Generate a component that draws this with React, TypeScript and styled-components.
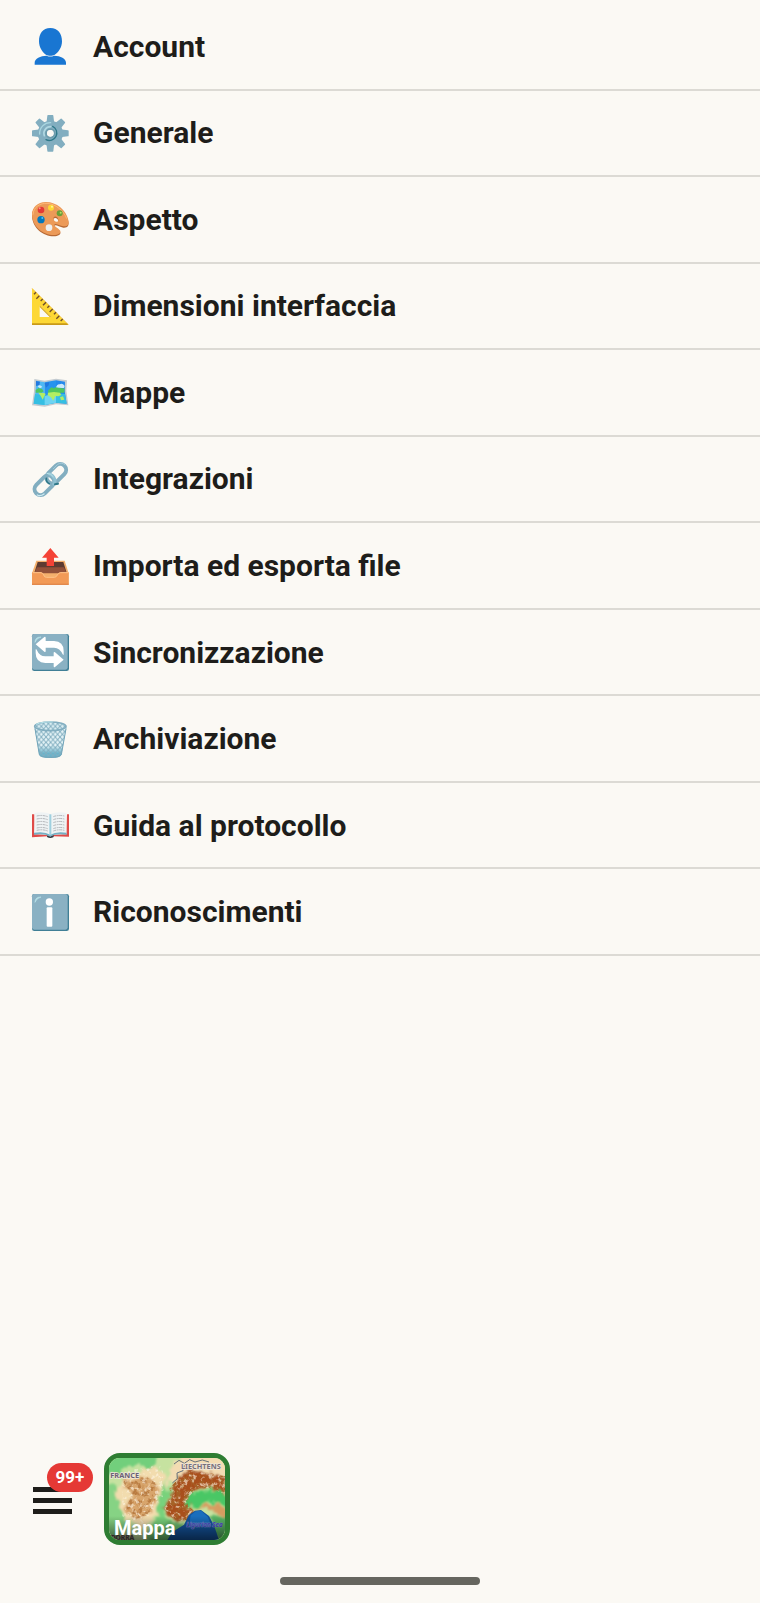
import React from "react";
import styled, { createGlobalStyle } from "styled-components";

const GlobalStyle = createGlobalStyle`
  * { box-sizing: border-box; }
  body { margin: 0; background: #fbf9f4; color: #1e1d1a; font-family: Roboto, "Liberation Sans", sans-serif; text-rendering: geometricPrecision; }
`;

const Menu = styled.ul`
  list-style: none;
  margin: 0;
  padding: 4px 0 0;
  min-height: 956px;
  display: grid;
  grid-template-columns: 1fr;
  grid-auto-rows: 1fr;
`;

const Page = styled.div`
  min-height: 100vh;
  display: flex;
  flex-direction: column;
  background: #fbf9f4;
`;

const MenuItem = styled.li`
  display: flex;
  border-bottom: 2px solid #dcdad4;
`;

const MenuButton = styled.button`
  flex: 1;
  display: flex;
  align-items: center;
  gap: 24px;
  padding: 1px 32px 0;
  border: 0;
  background: none;
  color: inherit;
  font: 700 30px/36px Roboto, "Liberation Sans", sans-serif;
  text-align: left;
  cursor: pointer;
`;

const Icon = styled.svg`
  width: 37px;
  height: 37px;
  flex: none;
  overflow: visible;
`;

const BottomBar = styled.footer`
  margin-top: auto;
  display: flex;
  align-items: center;
  gap: 32px;
  padding: 24px 32px 32px 33px;
`;

const HamburgerButton = styled.button`
  position: relative;
  display: flex;
  flex-direction: column;
  gap: 6px;
  padding: 2px 0 0;
  border: 0;
  background: none;
  cursor: pointer;
`;

const Bar = styled.span`
  width: 39px;
  height: 5px;
  background: #1e1d1a;
`;

const Badge = styled.span`
  position: absolute;
  left: 14px;
  bottom: 22px;
  width: 46px;
  border-radius: 15px;
  background: #e53935;
  color: #fff;
  font: 700 17px/29px Roboto, "Liberation Sans", sans-serif;
  text-align: center;
`;

const MapButton = styled.button`
  position: relative;
  display: flex;
  width: 126px;
  height: 92px;
  padding: 0;
  overflow: hidden;
  border: 5px solid #2e7d32;
  border-radius: 16px;
  background: #b9d99a;
  cursor: pointer;
`;

const MapArt = styled.svg`
  width: 100%;
  height: 100%;
`;

const MapLabel = styled.span`
  position: absolute;
  left: 0;
  right: 0;
  bottom: 0;
  padding: 0 5px;
  background: linear-gradient(transparent, rgba(0, 0, 0, 0.55));
  color: #fff;
  font: 700 20px/24px Roboto, "Liberation Sans", sans-serif;
  text-align: left;
`;

const HomeIndicator = styled.div`
  align-self: center;
  width: 200px;
  height: 8px;
  margin-bottom: 18px;
  border-radius: 4px;
  background: #66665f;
`;

const PersonArt = () => (
  <g fill="#1976d2">
    <path d="M55 0C32 0 21 17 21 40C21 58 32 75 43 81C48 84 62 84 67 81C79 75 90 58 90 40C90 17 78 0 55 0Z" />
    <path d="M8 110V104C8 92 25 83 44 83Q55 88 66 83C86 83 102 92 102 104V110Z" />
  </g>
);

const GearArt = () => (
  <>
    <g fill="#82aec0">
      {[0, 45, 90, 135, 180, 225, 270, 315].map((a) => (
        <path key={a} d="M43 26L46 2Q46 0 48 0H62Q64 0 64 2L67 26Z" transform={`rotate(${a} 55 55)`} />
      ))}
      <path fillRule="evenodd" d="M55 17A38 38 0 1 1 54.9 17ZM55 45A10 10 0 1 0 55.1 45Z" />
    </g>
    <path d="M23 57A32 32 0 0 1 56 23" fill="none" stroke="#a9d6e0" strokeWidth="4" strokeLinecap="round" />
    <path d="M37 62A20 20 0 0 1 56 35" fill="none" stroke="#b0d8e2" strokeWidth="5" strokeLinecap="round" />
    <path d="M62 34A22 22 0 0 1 42 74" fill="none" stroke="#2f7889" strokeWidth="4" strokeLinecap="round" />
    <circle cx="55" cy="55" r="13" fill="none" stroke="#6d9cac" strokeWidth="5" />
    <circle cx="55" cy="55" r="10" fill="#fbf9f4" />
  </>
);

const paletteShape =
  "M41 3C16 4 0 19 0 41C1 77 34 102 65 102C79 102 87 97 85 90C83 83 66 77 67 71C69 65 82 74 94 76C107 77 112 70 109 57C103 27 72 2 41 3ZM65 49C69 44 78 48 79 56C80 63 71 64 67 59C65 56 64 52 65 49Z";
const PaletteArt = () => (
  <>
    <path d={paletteShape} transform="translate(0 4)" fill="#b86a35" fillRule="evenodd" />
    <path d={paletteShape} fill="#ec9a58" fillRule="evenodd" />
    <path d="M3 41C4 17 26 6 45 7C70 8 96 30 104 53" fill="none" stroke="#ffb877" strokeWidth="3" />
    <circle cx="27" cy="27" r="10" fill="#e53935" />
    <circle cx="57" cy="20" r="9" fill="#fdd835" />
    <circle cx="83" cy="37" r="9" fill="#689f38" />
    <circle cx="27" cy="56" r="11" fill="#0277bd" />
    <circle cx="51" cy="80" r="10" fill="#eeeeee" />
    <circle cx="23" cy="22" r="3" fill="#ff9187" />
    <circle cx="60" cy="17" r="3" fill="#fff59d" />
    <circle cx="86" cy="35" r="3" fill="#b6dc68" />
    <circle cx="31" cy="51" r="3" fill="#4fc3f7" />
  </>
);

const RulerArt = () => (
  <>
    <path d="M0 1L109 110H0ZM23 52V87H58Z" fill="#fdd835" fillRule="evenodd" />
    <path d="M0 106H105L109 111H0Z" fill="#c99a18" />
    <path d="M23 52L58 87H53L23 57Z" fill="#d8aa20" />
    <path d="M0 1L109 110" stroke="#f2b82c" strokeWidth="2" />
    {[0, 1, 2, 3, 4, 5, 6, 7, 8].map((i) => (
      <path
        key={i}
        d={i % 2 ? "M12 13L3 22" : "M12 13L6 19"}
        transform={`translate(${i * 10} ${i * 10})`}
        stroke="#6d4c2b"
        strokeWidth="4"
      />
    ))}
  </>
);

const WorldMapArt = () => (
  <>
    <path d="M7 15L38 20L72 14L105 19L103 50L109 94L72 91L38 98L0 94L6 52Z" fill="#c3cbd0" />
    <path d="M12 20L38 25L38 93L5 89L11 52Z" fill="#4db8f5" />
    <path d="M38 25L72 19L72 86L38 93Z" fill="#2793ee" />
    <path d="M72 19L99 23L98 51L104 89L72 86Z" fill="#2389ed" />
    <path d="M9 60L38 66L72 58L99 60L104 89L72 86L38 93L5 89Z" fill="#35bfe2" />
    <path d="M38 66L72 58V86L38 93Z" fill="#6dd4f2" />
    <path d="M12 21L24 23L22 34L12 36ZM38 28L52 24L50 34L42 41Z" fill="#2378df" />
    <path d="M11 48L20 42L30 45L35 52L29 56H11ZM48 50L58 40L66 43L72 39L82 41L98 44L97 56L86 56L79 62L72 57L61 59L49 57Z" fill="#4fc65e" />
    <path d="M19 56L36 57L41 60L36 68L32 77L26 66ZM48 56L66 54L84 56L88 63L79 67L70 66L64 80L57 70L47 64ZM84 70L93 67L97 77L87 79Z" fill="#b3ee62" />
    <path d="M72 40Q76 28 83 31Q91 25 98 36L96 42Q83 43 72 40ZM17 37Q24 30 31 39L24 43Z" fill="#c9e8fb" />
  </>
);

const LinkArt = () => (
  <g fill="none" strokeLinecap="round">
    <rect x="-34" y="-18" width="68" height="36" rx="18" transform="translate(73 38) rotate(-45)" stroke="#82aec0" strokeWidth="12" />
    <rect x="-34" y="-18" width="68" height="36" rx="18" transform="translate(37 73) rotate(-45)" stroke="#82aec0" strokeWidth="12" />
    <path d="M43 52Q42 63 52 68" stroke="#2f7889" strokeWidth="5" />
    <path d="M51 38Q63 42 68 54Q71 61 65 69" stroke="#8fc0d1" strokeWidth="9" />
    <path d="M69 70L78 68" stroke="#2f7889" strokeWidth="6" />
    <path d="M45 37Q58 37 64 47" stroke="#b9e4ea" strokeWidth="3" />
    <path d="M64 23L76 11Q87 2 99 11" stroke="#a2cad9" strokeWidth="3" />
    <path d="M16 102Q25 107 36 99" stroke="#cdebf2" strokeWidth="4" />
  </g>
);

const OutboxArt = () => (
  <>
    <path d="M13 38H98L110 76V110H0V76Z" fill="#f4b06c" />
    <path d="M17 42H94L104 74H7Z" fill="#5d3b31" />
    <path d="M15 58H96L104 76H7Z" fill="#925139" />
    <path d="M0 73H27Q33 74 35 81Q37 87 43 87H67Q73 87 76 81Q79 74 85 73H110V110H0Z" fill="#f29a56" />
    <path d="M2 74H27Q33 75 35 81Q37 88 43 88H67Q73 88 76 81Q79 75 85 74H108" fill="none" stroke="#ffc48a" strokeWidth="3" />
    <path d="M0 107H110V110H0Z" fill="#dc8046" />
    <path d="M55 0L80 29H66V54H44V29H30Z" fill="#f44336" />
  </>
);

const TileBase = () => (
  <>
    <rect width="111" height="111" rx="7" fill="#407f96" />
    <rect width="107" height="107" rx="7" fill="#8ab1c3" />
    <path d="M9 25Q9 9 27 9Q13 13 9 25Z" fill="#b9e4ea" stroke="#b9e4ea" strokeWidth="2" strokeLinejoin="round" />
  </>
);

const syncArrow = "M11 31L37 9Q41 7 41 12V21H66Q95 22 95 51V60Q95 65 92 61Q84 42 66 41H41V51Q41 56 37 53Z";
const SyncArt = () => (
  <>
    <TileBase />
    <g fill="#fff">
      <path d={syncArrow} />
      <path d={syncArrow} transform="rotate(180 53 54)" />
    </g>
  </>
);

const BasketArt = () => (
  <>
    <defs>
      <pattern id="mesh" width="14" height="16" patternUnits="userSpaceOnUse">
        <path d="M0 0L14 16M14 0L0 16" stroke="#82aec0" strokeWidth="3" />
      </pattern>
      <linearGradient id="basketFill" x2="0" y2="1">
        <stop offset="0.6" stopColor="#e4f3f6" />
        <stop offset="0.85" stopColor="#68b3ca" />
      </linearGradient>
    </defs>
    <path d="M7 17L22 102Q25 111 55 111Q85 111 88 102L104 17Z" fill="url(#basketFill)" />
    <path d="M7 17L22 102Q25 111 55 111Q85 111 88 102L104 17Z" fill="url(#mesh)" />
    <path d="M9 23L22 101Q26 109 55 109Q84 109 88 101L102 23" fill="none" stroke="#72a5b9" strokeWidth="3" />
    <ellipse cx="55" cy="16" rx="47" ry="13" fill="#d9edf2" />
    <ellipse cx="55" cy="16" rx="47" ry="13" fill="url(#mesh)" />
    <ellipse cx="55" cy="16" rx="47" ry="13" fill="none" stroke="#82aec0" strokeWidth="5" />
    <path d="M12 10Q30 2 62 3" fill="none" stroke="#b9e4ea" strokeWidth="3" />
  </>
);

const BookArt = () => (
  <>
    <path d="M0 22H7L9 82L50 84Q55 90 60 84L102 82L105 22H111V89L63 88Q55 94 47 88L0 91Z" fill="#df4b48" />
    <path d="M45 84Q55 91 65 84V90Q55 96 45 90Z" fill="#343b43" />
    <path d="M8 18Q36 13 55 21Q76 13 103 18L104 82Q71 77 55 88Q38 77 6 82Z" fill="#eff3f4" />
    <path d="M6 77Q38 72 55 83Q72 72 104 77V83Q71 79 55 89Q38 79 6 83Z" fill="#75aec2" />
    <path d="M52 22H58V85H52Z" fill="#9fd0df" />
    {[27, 36, 45, 54, 63, 70].map((y) => (
      <path
        key={y}
        d={`M14 ${y}Q32 ${y - 4} 47 ${y + 2}M64 ${y + 2}Q79 ${y - 4} 97 ${y}`}
        fill="none"
        stroke="#b4b7ba"
        strokeWidth="3"
        strokeDasharray="9 2 5 2"
      />
    ))}
  </>
);

const InfoArt = () => (
  <>
    <TileBase />
    <circle cx="52" cy="24" r="11" fill="#fff" />
    <rect x="44" y="40" width="17" height="58" rx="3" fill="#fff" />
  </>
);

const entries: { label: string; Art: React.FC }[] = [
  { label: "Account", Art: PersonArt },
  { label: "Generale", Art: GearArt },
  { label: "Aspetto", Art: PaletteArt },
  { label: "Dimensioni interfaccia", Art: RulerArt },
  { label: "Mappe", Art: WorldMapArt },
  { label: "Integrazioni", Art: LinkArt },
  { label: "Importa ed esporta file", Art: OutboxArt },
  { label: "Sincronizzazione", Art: SyncArt },
  { label: "Archiviazione", Art: BasketArt },
  { label: "Guida al protocollo", Art: BookArt },
  { label: "Riconoscimenti", Art: InfoArt },
];

const alps = "M182 90L215 55L240 38L300 45L348 55V108L300 90L262 92L238 118L236 145L255 158L235 185L205 190L180 172L166 150L185 120Z";
const massif = "M40 70L110 55L140 75L145 110L135 140L120 170L70 185L50 150L70 110Z";
const ReliefMap = () => (
  <MapArt viewBox="0 0 348 246" preserveAspectRatio="none" aria-hidden="true">
    <defs>
      <filter id="soft" x="-20%" y="-20%" width="140%" height="140%">
        <feGaussianBlur stdDeviation="6" />
        <feTurbulence type="fractalNoise" baseFrequency="0.05" numOctaves="4" seed="4" result="n" />
        <feDisplacementMap in="SourceGraphic" in2="n" scale="34" xChannelSelector="R" yChannelSelector="G" />
        <feGaussianBlur stdDeviation="3" />
      </filter>
      <filter id="grain" x="0" y="0" width="100%" height="100%">
        <feTurbulence type="fractalNoise" baseFrequency="0.07" numOctaves="3" seed="9" />
        <feColorMatrix values="0 0 0 0 0.38  0 0 0 0 0.12  0 0 0 0 0.02  5 0 0 0 -2.3" />
        <feComposite in2="SourceGraphic" operator="in" />
      </filter>
      <filter id="light" x="0" y="0" width="100%" height="100%">
        <feTurbulence type="fractalNoise" baseFrequency="0.08" numOctaves="3" seed="21" />
        <feColorMatrix values="0 0 0 0 1  0 0 0 0 0.93  0 0 0 0 0.8  5 0 0 0 -2.6" />
        <feComposite in2="SourceGraphic" operator="in" />
      </filter>
    </defs>
    <rect width="348" height="246" fill="#c6e2a0" />
    <g filter="url(#soft)">
      <path d="M-20 -20H160L130 30L60 20L20 50L-20 60Z" fill="#72cf7c" />
      <path d="M-20 80H20L30 140L60 200L20 246H-20Z" fill="#86d384" />
      <path d="M20 90L60 50L130 25L165 50L160 110L140 170L100 210L50 180L25 130Z" fill="#f2dcae" />
      <path d={massif} fill="#d8a56c" />
      <path d="M150 110L165 70L185 110L170 150L175 200L150 250H110L140 180Z" fill="#78d27c" />
      <path d="M165 80L200 10L225 -20H370V70L300 60L230 50Z" fill="#f3dcb2" />
      <path d={alps} fill="#a9501f" />
      <path d="M236 145L232 120L262 98L310 96L370 110V152L300 130L262 152Z" fill="#48c765" />
      <path d="M255 158L285 140L320 138L370 165V190L315 160L285 152Z" fill="#d79c60" />
      <path d="M300 170L370 180V260H330Z" fill="#58b565" />
      <path d="M130 230L175 195L230 195L190 260H130Z" fill="#6cc070" />
    </g>
    <path d={alps} fill="#000" filter="url(#grain)" />
    <path d={alps} fill="#000" filter="url(#light)" opacity="0.6" />
    <path d={massif} fill="#000" filter="url(#grain)" opacity="0.6" />
    <path d="M40 40L160 20L165 110L100 200L40 180Z" fill="#000" filter="url(#light)" opacity="0.6" />
    <path d="M175 246L190 222L225 200L240 170L258 158L276 156L300 174L316 205L330 246Z" fill="#14559f" />
    <path d="M245 172L260 160L276 158L296 176L308 205L240 205Z" fill="#1c74c4" opacity="0.8" />
    <path d="M195 18L210 7L226 16L242 5L258 12L280 6L300 12M190 75L205 62L204 45L222 38L226 22" fill="none" stroke="#66707a" strokeWidth="3" />
    <g fontFamily="Noto Sans, sans-serif" stroke="#eee6da" strokeWidth="4" paintOrder="stroke">
      <text x="4" y="60" fontSize="22" fontWeight="700" fill="#6b6172">FRANCE</text>
      <text x="216" y="34" fontSize="22" fontWeight="700" fill="#77707a">LIECHTENS</text>
      <text x="232" y="208" fontSize="19" fontStyle="italic" fontWeight="600" fill="#4646c8" stroke="#8fa6dc" strokeWidth="2">Ligurian Sea</text>
      <text x="5" y="246" fontSize="20" fontWeight="700" fill="#514949" stroke="#a79682" strokeWidth="2">DORRA</text>
    </g>
  </MapArt>
);

export default function App() {
  return (
    <Page>
      <GlobalStyle />
      <nav aria-label="Impostazioni">
        <Menu>
          {entries.map(({ label, Art }) => (
            <MenuItem key={label}>
              <MenuButton type="button">
                <Icon viewBox="0 0 111 111" aria-hidden="true">
                  <Art />
                </Icon>
                {label}
              </MenuButton>
            </MenuItem>
          ))}
        </Menu>
      </nav>
      <BottomBar>
        <HamburgerButton type="button" aria-label="Menu">
          <Bar />
          <Bar />
          <Bar />
          <Badge>99+</Badge>
        </HamburgerButton>
        <MapButton type="button">
          <ReliefMap />
          <MapLabel>Mappa</MapLabel>
        </MapButton>
      </BottomBar>
      <HomeIndicator />
    </Page>
  );
}
